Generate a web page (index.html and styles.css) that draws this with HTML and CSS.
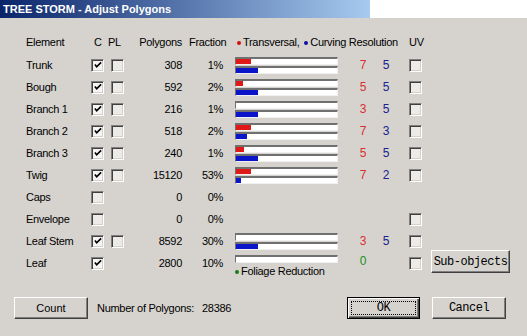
FILE: index.html
```html
<!DOCTYPE html>
<html lang="en">
<head>
    <meta charset="UTF-8">
    <title>TREE STORM - Adjust Polygons</title>
    <link rel="stylesheet" href="styles.css">
</head>
<body>
    <div class="titlebar">
        <div class="caption">TREE STORM - Adjust Polygons</div>
        <div class="outside"></div>
    </div>
    <div class="dialog">
        <div class="table">
            <!-- header -->
            <div class="hd">Element</div>
            <div class="hd hd-c">C</div>
            <div class="hd hd-pl">PL</div>
            <div class="hd num">Polygons</div>
            <div class="hd hd-frac">Fraction</div>
            <div class="hd hd-res"><span class="dot red"></span>Transversal, <span class="dot blue"></span>Curving Resolution</div>
            <div class="hd hd-uv">UV</div>
            <div></div>

            <!-- Trunk -->
            <div class="name">Trunk</div>
            <div class="cell"><span class="cb"><svg viewBox="0 0 9 9"><polyline points="1,4 3,6.5 8,1.5"/></svg></span></div>
            <div class="cell"><span class="cb off"></span></div>
            <div class="num">308</div>
            <div class="num">1%</div>
            <div class="bars"><div class="bar"><i class="fill red" style="width:15px"></i></div><div class="bar"><i class="fill blue" style="width:22px"></i></div></div>
            <div class="val red-t">7</div>
            <div class="val blue-t">5</div>
            <div class="cell uv"><span class="cb off"></span></div>
            <div></div>

            <!-- Bough -->
            <div class="name">Bough</div>
            <div class="cell"><span class="cb"><svg viewBox="0 0 9 9"><polyline points="1,4 3,6.5 8,1.5"/></svg></span></div>
            <div class="cell"><span class="cb off"></span></div>
            <div class="num">592</div>
            <div class="num">2%</div>
            <div class="bars"><div class="bar"><i class="fill red" style="width:7px"></i></div><div class="bar"><i class="fill blue" style="width:22px"></i></div></div>
            <div class="val red-t">5</div>
            <div class="val blue-t">5</div>
            <div class="cell uv"><span class="cb off"></span></div>
            <div></div>

            <!-- Branch 1 -->
            <div class="name">Branch 1</div>
            <div class="cell"><span class="cb"><svg viewBox="0 0 9 9"><polyline points="1,4 3,6.5 8,1.5"/></svg></span></div>
            <div class="cell"><span class="cb off"></span></div>
            <div class="num">216</div>
            <div class="num">1%</div>
            <div class="bars"><div class="bar"></div><div class="bar"><i class="fill blue" style="width:22px"></i></div></div>
            <div class="val red-t">3</div>
            <div class="val blue-t">5</div>
            <div class="cell uv"><span class="cb off"></span></div>
            <div></div>

            <!-- Branch 2 -->
            <div class="name">Branch 2</div>
            <div class="cell"><span class="cb"><svg viewBox="0 0 9 9"><polyline points="1,4 3,6.5 8,1.5"/></svg></span></div>
            <div class="cell"><span class="cb off"></span></div>
            <div class="num">518</div>
            <div class="num">2%</div>
            <div class="bars"><div class="bar"><i class="fill red" style="width:15px"></i></div><div class="bar"><i class="fill blue" style="width:11px"></i></div></div>
            <div class="val red-t">7</div>
            <div class="val blue-t">3</div>
            <div class="cell uv"><span class="cb off"></span></div>
            <div></div>

            <!-- Branch 3 -->
            <div class="name">Branch 3</div>
            <div class="cell"><span class="cb"><svg viewBox="0 0 9 9"><polyline points="1,4 3,6.5 8,1.5"/></svg></span></div>
            <div class="cell"><span class="cb off"></span></div>
            <div class="num">240</div>
            <div class="num">1%</div>
            <div class="bars"><div class="bar"><i class="fill red" style="width:8px"></i></div><div class="bar"><i class="fill blue" style="width:22px"></i></div></div>
            <div class="val red-t">5</div>
            <div class="val blue-t">5</div>
            <div class="cell uv"><span class="cb off"></span></div>
            <div></div>

            <!-- Twig -->
            <div class="name">Twig</div>
            <div class="cell"><span class="cb"><svg viewBox="0 0 9 9"><polyline points="1,4 3,6.5 8,1.5"/></svg></span></div>
            <div class="cell"><span class="cb off"></span></div>
            <div class="num">15120</div>
            <div class="num">53%</div>
            <div class="bars"><div class="bar"><i class="fill red" style="width:15px"></i></div><div class="bar"><i class="fill blue" style="width:5px"></i></div></div>
            <div class="val red-t">7</div>
            <div class="val blue-t">2</div>
            <div class="cell uv"><span class="cb off"></span></div>
            <div></div>

            <!-- Caps -->
            <div class="name">Caps</div>
            <div class="cell"><span class="cb off"></span></div>
            <div></div>
            <div class="num">0</div>
            <div class="num">0%</div>
            <div></div>
            <div></div>
            <div></div>
            <div></div>
            <div></div>

            <!-- Envelope -->
            <div class="name">Envelope</div>
            <div class="cell"><span class="cb off"></span></div>
            <div></div>
            <div class="num">0</div>
            <div class="num">0%</div>
            <div></div>
            <div></div>
            <div></div>
            <div class="cell uv"><span class="cb off"></span></div>
            <div></div>

            <!-- Leaf Stem -->
            <div class="name">Leaf Stem</div>
            <div class="cell"><span class="cb"><svg viewBox="0 0 9 9"><polyline points="1,4 3,6.5 8,1.5"/></svg></span></div>
            <div class="cell"><span class="cb off"></span></div>
            <div class="num">8592</div>
            <div class="num">30%</div>
            <div class="bars"><div class="bar"></div><div class="bar"><i class="fill blue" style="width:22px"></i></div></div>
            <div class="val red-t">3</div>
            <div class="val blue-t">5</div>
            <div class="cell uv"><span class="cb off"></span></div>
            <div></div>

            <!-- Leaf -->
            <div class="name">Leaf</div>
            <div class="cell"><span class="cb"><svg viewBox="0 0 9 9"><polyline points="1,4 3,6.5 8,1.5"/></svg></span></div>
            <div></div>
            <div class="num">2800</div>
            <div class="num">10%</div>
            <div class="bars leaf"><div class="bar"></div><div class="foliage"><span class="dot green"></span>Foliage Reduction</div></div>
            <div class="val green-t leaf-val">0</div>
            <div></div>
            <div class="cell uv"><span class="cb off"></span></div>
            <div class="cell"><button class="btn mono sub">Sub-objects</button></div>
        </div>

        <div class="footer">
            <button class="btn count">Count</button>
            <span class="total-label">Number of Polygons:</span>
            <span class="total">28386</span>
            <span class="spacer"></span>
            <button class="btn mono default"><span class="focus">OK</span></button>
            <button class="btn mono cancel">Cancel</button>
        </div>
    </div>
</body>
</html>
```

FILE: styles.css
```css
body {
    margin: 0;
    padding: 0;
    width: 527px;
    height: 336px;
    overflow: hidden;
    background-color: #d6d3ce;
    font-family: "Liberation Sans", Arial, sans-serif;
    font-size: 11px;
    letter-spacing: -0.3px;
    color: #000;
}
.titlebar {
    display: flex;
    height: 18px;
}
.caption {
    width: 370px;
    padding-left: 3px;
    box-sizing: border-box;
    background: linear-gradient(to right, #0a246a, #a6caf0);
    color: #fff;
    font-weight: bold;
    letter-spacing: 0;
    line-height: 18px;
}
.outside {
    flex: 1;
    background-color: #fff;
}
.dialog {
    padding-top: 14px;
}
.table {
    display: grid;
    grid-template-columns: 65px 20px 20px 51px 41px 115px 28px 23px 42px 79px;
    grid-auto-rows: 22px;
    padding-left: 26px;
    align-items: center;
}
.hd {
    white-space: nowrap;
    height: 22px;
    line-height: 22px;
    margin-bottom: 2px;
}
.hd-c {
    padding-left: 3px;
}
.hd-pl {
    margin-left: -3px;
}
.hd-frac {
    padding-left: 7px;
}
.hd-res {
    grid-column: span 3;
    padding-left: 12px;
}
.hd-uv {
    padding-left: 20px;
}
.dot {
    display: inline-block;
    width: 4px;
    height: 4px;
    border-radius: 50%;
    margin: 0 2px 1px 2px;
    vertical-align: middle;
}
.dot.red { background-color: #d01010; }
.dot.blue { background-color: #1010a0; }
.dot.green { background-color: #108010; }
.name {
    white-space: nowrap;
}
.num {
    text-align: right;
}
.cell {
    display: flex;
    align-items: center;
}
.uv {
    padding-left: 20px;
}
.cb {
    width: 13px;
    height: 13px;
    box-sizing: border-box;
    border-top: 1px solid #808080;
    border-left: 1px solid #808080;
    border-right: 1px solid #fff;
    border-bottom: 1px solid #fff;
    box-shadow: inset 1px 1px 0 #404040, inset -1px -1px 0 #d4d0c8;
    background-color: #f5f5f5;
    display: flex;
    align-items: center;
    justify-content: center;
}
.cb.off {
    background-color: #ecebe8;
}
.cb svg {
    width: 8px;
    height: 8px;
    fill: none;
    stroke: #000;
    stroke-width: 1.9;
}
.bars {
    padding-left: 12px;
    display: flex;
    flex-direction: column;
    gap: 1px;
}
.bar {
    width: 103px;
    height: 8px;
    box-sizing: border-box;
    border-top: 2px solid #707070;
    border-left: 1px solid #707070;
    border-right: 1px solid #f0f0f0;
    border-bottom: 1px solid #f0f0f0;
    background-color: #fff;
}
.fill {
    display: block;
    height: 100%;
}
.fill.red { background-color: #e01818; }
.fill.blue { background-color: #0a14c8; }
.bars.leaf {
    align-self: start;
    margin-top: 3px;
    gap: 0;
}
.foliage {
    white-space: nowrap;
    line-height: 16px;
    margin-left: -2px;
}
.val {
    text-align: right;
    font-size: 12px;
}
.red-t { color: #d83030; }
.blue-t { color: #202090; }
.green-t { color: #209020; }
.leaf-val {
    margin-top: -5px;
}
.btn {
    background-color: #d6d3ce;
    border: 1px solid;
    border-color: #fff #404040 #404040 #fff;
    box-shadow: inset -1px -1px 0 #808080;
    font-family: "Liberation Sans", Arial, sans-serif;
    font-size: 11px;
    color: #000;
    padding: 0;
    height: 22px;
    box-sizing: border-box;
}
.mono {
    font-family: "Liberation Mono", "Courier New", monospace;
    font-size: 12px;
    letter-spacing: -0.5px;
}
.sub {
    width: 79px;
    height: 23px;
    overflow: hidden;
    white-space: nowrap;
    margin-top: -3px;
}
.footer {
    display: flex;
    align-items: center;
    margin-top: 23px;
    padding-left: 14px;
    padding-right: 21px;
}
.count {
    width: 74px;
    margin-right: 9px;
}
.total-label {
    width: 105px;
}
.spacer {
    flex: 1;
}
.default {
    width: 73px;
    border: 1px solid #000;
    box-shadow: inset 1px 1px 0 #fff, inset -1px -1px 0 #404040, inset -2px -2px 0 #808080;
    padding: 3px;
    margin-right: 12px;
}
.focus {
    display: block;
    height: 100%;
    border: 1px dotted #000;
    box-sizing: border-box;
    line-height: 12px;
}
.cancel {
    width: 74px;
}
```
